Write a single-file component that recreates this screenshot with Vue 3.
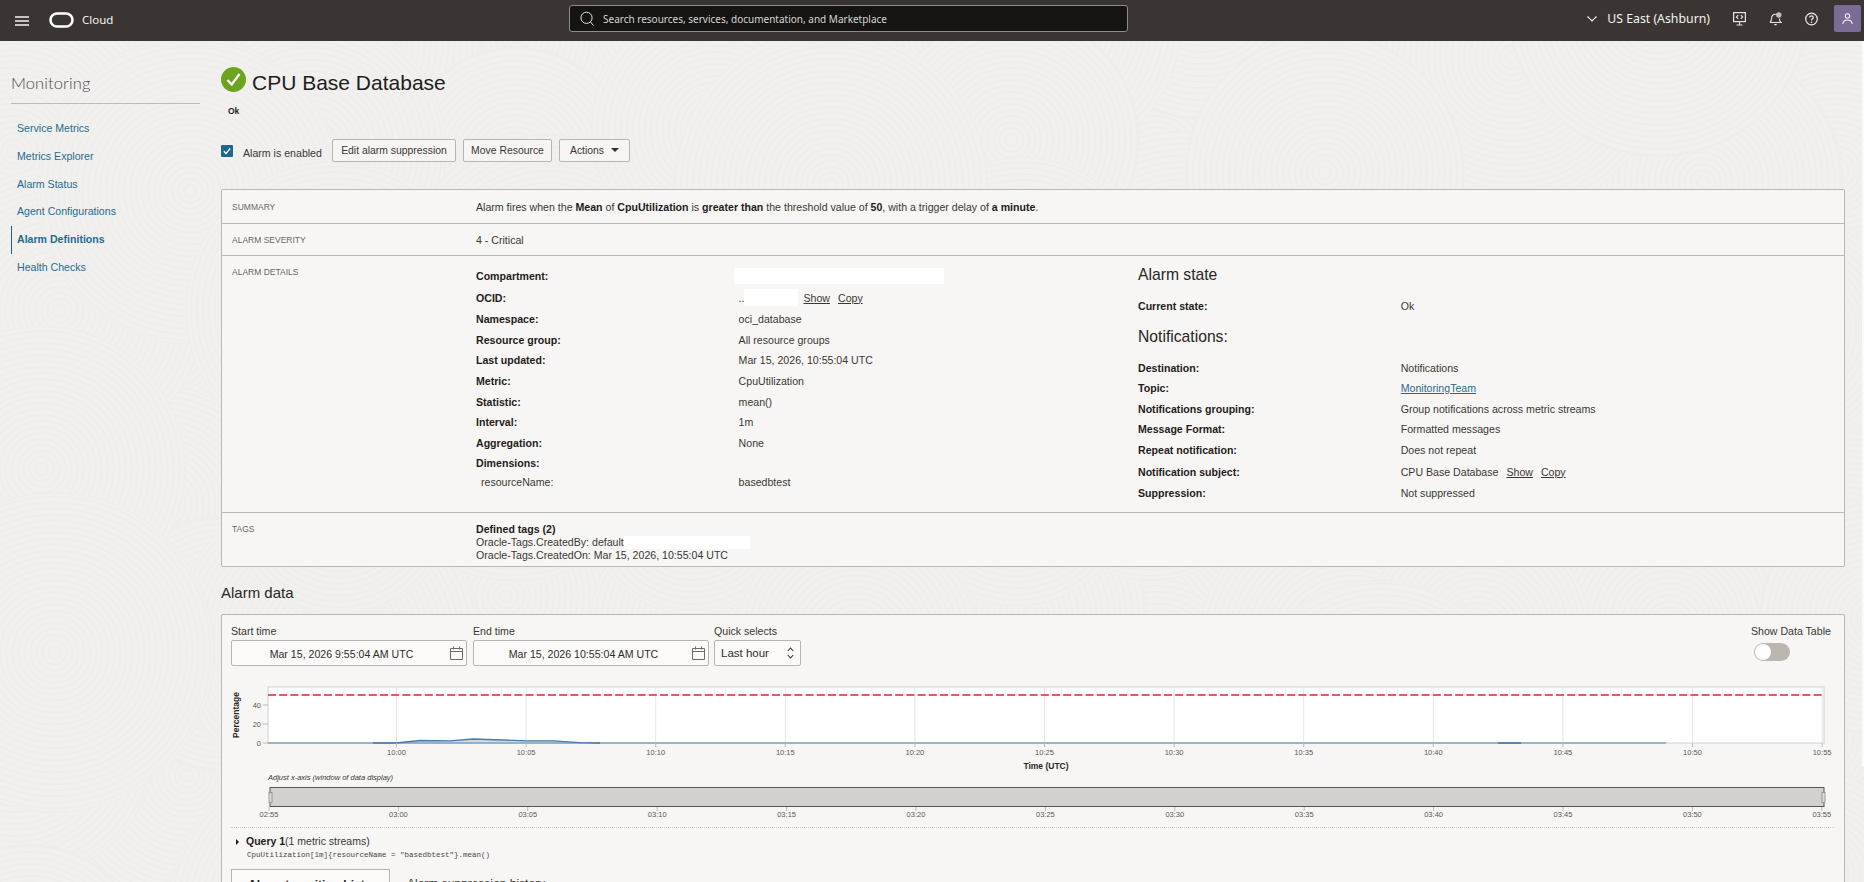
<script setup>
const nav = ['Service Metrics', 'Metrics Explorer', 'Alarm Status', 'Agent Configurations', 'Alarm Definitions', 'Health Checks']

const leftRows = [
  { k: 'Compartment:', v: '', h: 22 },
  { k: 'OCID:', v: '', h: 21.5, ocid: true },
  { k: 'Namespace:', v: 'oci_database', h: 21 },
  { k: 'Resource group:', v: 'All resource groups', h: 20.5 },
  { k: 'Last updated:', v: 'Mar 15, 2026, 10:55:04 UTC', h: 20 },
  { k: 'Metric:', v: 'CpuUtilization', h: 21 },
  { k: 'Statistic:', v: 'mean()', h: 21 },
  { k: 'Interval:', v: '1m', h: 20.5 },
  { k: 'Aggregation:', v: 'None', h: 21 },
  { k: 'Dimensions:', v: '', h: 19.5 },
  { k: 'resourceName:', v: 'basedbtest', h: 18, sub: true }
]

const rightRows = [
  { k: 'Destination:', v: 'Notifications', h: 21 },
  { k: 'Topic:', v: 'MonitoringTeam', h: 20.5, link: true },
  { k: 'Notifications grouping:', v: 'Group notifications across metric streams', h: 20.5 },
  { k: 'Message Format:', v: 'Formatted messages', h: 20.5 },
  { k: 'Repeat notification:', v: 'Does not repeat', h: 21.5 },
  { k: 'Notification subject:', v: 'CPU Base Database', h: 21.5, actions: true },
  { k: 'Suppression:', v: 'Not suppressed', h: 21 }
]

// Faint contour whorls of the page background
const whorls = []
let seed = 7
const rnd = () => {
  seed = (seed * 16807) % 2147483647
  return seed / 2147483647
}
for (let y = 20; y < 950; y += 150) {
  for (let x = 20; x < 1950; x += 165) {
    const cx = x + rnd() * 90 - 45
    const cy = y + rnd() * 90 - 45
    const R = 105 + rnd() * 55
    const rings = []
    for (let r = 6; r < R; r += 6) rings.push(r)
    whorls.push({ cx, cy, R, rings })
  }
}
whorls.sort(() => rnd() - 0.5)

const xStart = 396.5
const xStep = 129.6
const topTicks = Array.from({ length: 12 }, (_, i) => ({
  x: xStart + i * xStep,
  label: `10:${String(i * 5).padStart(2, '0')}`
}))
const rangeLabels = ['02:55', '03:00', '03:05', '03:10', '03:15', '03:20', '03:25', '03:30', '03:35', '03:40', '03:45', '03:50', '03:55']
const rangeTicks = rangeLabels.map((label, i) => ({ x: 269 + i * 129.4, label }))
const yTicks = [
  { y: 705, label: '40' },
  { y: 724, label: '20' },
  { y: 743, label: '0' }
]
</script>

<template>
  <div class="app">
    <svg class="texture" width="1864" height="882" viewBox="0 0 1864 882" aria-hidden="true">
      <g v-for="(w, i) in whorls" :key="i">
        <circle :cx="w.cx" :cy="w.cy" :r="w.R" class="whorl-bg" />
        <circle v-for="r in w.rings" :key="r" :cx="w.cx" :cy="w.cy" :r="r" class="whorl-ring" />
      </g>
    </svg>

    <header class="topbar">
      <div class="brand">
        <svg class="burger" width="14" height="10" viewBox="0 0 14 10">
          <path d="M0 1h14M0 5h14M0 9h14" stroke="#f4f3f1" stroke-width="1.4" fill="none" />
        </svg>
        <svg class="logo" width="25" height="16" viewBox="0 0 25 16">
          <rect x="1.5" y="1.5" width="22" height="13" rx="6.5" fill="none" stroke="#fff" stroke-width="2.6" />
        </svg>
        <span class="cloud">Cloud</span>
      </div>
      <div class="search">
        <svg width="15" height="16" viewBox="0 0 15 16">
          <circle cx="6.5" cy="6.8" r="5.6" fill="none" stroke="#e6e4e1" stroke-width="1" />
          <path d="M10.5 11l3 3.5" stroke="#e6e4e1" stroke-width="1" fill="none" />
        </svg>
        <span>Search resources, services, documentation, and Marketplace</span>
      </div>
      <div class="tools">
        <svg class="chev" width="10" height="6" viewBox="0 0 10 6">
          <path d="M.5.5L5 5 9.500.5" fill="none" stroke="#f4f3f1" stroke-width="1.2" />
        </svg>
        <span class="region">US East (Ashburn)</span>
        <svg class="tool first" width="13" height="14" viewBox="0 0 13 14">
          <rect x=".6" y=".6" width="11.800" height="9" fill="none" stroke="#e8e6e3" stroke-width="1.2" />
          <path d="M5.200 3.200L3.400 5l1.800 1.800M7.800 3.200L9.600 5 7.800 6.800M6.500 9.600v3M3.500 13h6" fill="none" stroke="#e8e6e3" stroke-width="1.100" />
        </svg>
        <svg class="tool" width="13" height="14" viewBox="0 0 13 14">
          <path d="M1 10.500c1.200-1 1.600-2 1.600-4.200C2.600 4 4.200 2.200 6.500 2.200c1 0 1.800.3 2.400.8M10.400 6.500c0 2 .4 3 1.600 4H1M5.300 12.600h2.400" fill="none" stroke="#e8e6e3" stroke-width="1.100" />
          <circle cx="9.800" cy="3" r="2.700" fill="#c4c1bd" />
        </svg>
        <svg class="tool" width="13" height="14" viewBox="0 0 13 14">
          <circle cx="6.500" cy="7" r="5.800" fill="none" stroke="#f0eeeb" stroke-width="1.200" />
          <path d="M4.700 5.500c0-1 .8-1.700 1.800-1.700s1.800.7 1.800 1.600c0 1.400-1.800 1.400-1.800 3" fill="none" stroke="#f0eeeb" stroke-width="1.200" />
          <circle cx="6.500" cy="10.200" r=".8" fill="#f0eeeb" />
        </svg>
        <div class="avatar">
          <svg width="11" height="12" viewBox="0 0 11 12">
            <circle cx="5.500" cy="3" r="2.200" fill="none" stroke="#f1eff4" stroke-width="1.100" />
            <path d="M.8 11c.3-2.600 2-4 4.700-4s4.400 1.400 4.700 4" fill="none" stroke="#f1eff4" stroke-width="1.100" />
          </svg>
        </div>
      </div>
    </header>

    <div class="layout">
      <aside class="sidebar">
        <div class="side-title">Monitoring</div>
        <ul class="nav">
          <li v-for="item in nav" :key="item" :class="{ active: item === 'Alarm Definitions' }">{{ item }}</li>
        </ul>
      </aside>

      <main class="main">
        <div class="title-row">
          <svg width="25" height="25" viewBox="0 0 25 25">
            <circle cx="12.500" cy="12.500" r="12.500" fill="#6ba51f" />
            <path d="M6.500 13l4.200 4.500L18.500 7" fill="none" stroke="#fff" stroke-width="2.300" />
          </svg>
          <h1>CPU Base Database</h1>
        </div>
        <div class="status">Ok</div>

        <div class="actions">
          <span class="check">
            <svg width="12" height="12" viewBox="0 0 12 12">
              <rect width="12" height="12" rx="1" fill="#1c6b8f" />
              <path d="M2.800 6.200l2.200 2.300 4.200-5" fill="none" stroke="#fff" stroke-width="1.300" />
            </svg>
          </span>
          <span class="check-label">Alarm is enabled</span>
          <button class="btn b1">Edit alarm suppression</button>
          <button class="btn b2">Move Resource</button>
          <button class="btn b3">Actions<i class="caret"></i></button>
        </div>

        <section class="card summary">
          <div class="row r-summary">
            <div class="label">Summary</div>
            <div class="val">Alarm fires when the <b>Mean</b> of <b>CpuUtilization</b> is <b>greater than</b> the threshold value of <b>50</b>, with a trigger delay of <b>a minute</b>.</div>
          </div>
          <div class="row r-severity">
            <div class="label">Alarm Severity</div>
            <div class="val">4 - Critical</div>
          </div>
          <div class="row r-details">
            <div class="label top">Alarm Details</div>
            <div class="col-left">
              <div v-for="r in leftRows" :key="r.k" class="kv" :class="{ sub: r.sub }" :style="{ height: r.h + 'px' }">
                <span class="k">{{ r.k }}</span>
                <span class="v">
                  <template v-if="r.k === 'Compartment:'"><i class="redact red-comp"></i></template>
                  <template v-else-if="r.ocid">..<i class="redact red-ocid"></i><a class="act">Show</a><a class="act">Copy</a></template>
                  <template v-else>{{ r.v }}</template>
                </span>
              </div>
            </div>
            <div class="col-right">
              <h3 class="state-head">Alarm state</h3>
              <div class="kv current"><span class="k">Current state:</span><span class="v">Ok</span></div>
              <h3>Notifications:</h3>
              <div v-for="r in rightRows" :key="r.k" class="kv" :style="{ height: r.h + 'px' }">
                <span class="k">{{ r.k }}</span>
                <span class="v">
                  <a v-if="r.link" class="link">{{ r.v }}</a>
                  <template v-else>{{ r.v }}</template>
                  <template v-if="r.actions"><a class="act first-act">Show</a><a class="act">Copy</a></template>
                </span>
              </div>
            </div>
          </div>
          <div class="row r-tags">
            <div class="label top">Tags</div>
            <div class="tags">
              <b>Defined tags (2)</b>
              <div>Oracle-Tags.CreatedBy: default<i class="redact red-tag"></i></div>
              <div>Oracle-Tags.CreatedOn: Mar 15, 2026, 10:55:04 UTC</div>
            </div>
          </div>
        </section>

        <h2>Alarm data</h2>

        <section class="card data">
          <div class="filters">
            <div class="field f-start">
              <label>Start time</label>
              <div class="input">
                <span>Mar 15, 2026 9:55:04 AM UTC</span>
                <svg class="cal" width="13" height="14" viewBox="0 0 13 14">
                  <path d="M.5 2.500h12v11H.5zM.5 5.500h12M3.500.5v3M9.500.5v3" fill="none" stroke="#6f6b67" stroke-width="1" />
                </svg>
              </div>
            </div>
            <div class="field f-end">
              <label>End time</label>
              <div class="input">
                <span>Mar 15, 2026 10:55:04 AM UTC</span>
                <svg class="cal" width="13" height="14" viewBox="0 0 13 14">
                  <path d="M.5 2.500h12v11H.5zM.5 5.500h12M3.500.5v3M9.500.5v3" fill="none" stroke="#6f6b67" stroke-width="1" />
                </svg>
              </div>
            </div>
            <div class="field f-quick">
              <label>Quick selects</label>
              <div class="input select">
                <span>Last hour</span>
                <svg width="7" height="12" viewBox="0 0 7 12">
                  <path d="M.8 4l2.700-3 2.700 3M.8 8l2.700 3 2.700-3" fill="none" stroke="#312d2a" stroke-width="1.100" />
                </svg>
              </div>
            </div>
            <div class="toggle-wrap">
              <div class="toggle-label">Show Data Table</div>
              <div class="toggle"><i></i></div>
            </div>
          </div>

          <svg class="chart" width="1622" height="145" viewBox="222 680 1622 145">
            <rect x="268" y="687" width="1556" height="56" fill="#fff" stroke="#d2d0cd" stroke-width="1" />
            <line v-for="t in topTicks" :key="t.label" :x1="t.x" :x2="t.x" y1="687" y2="743" stroke="#e6e5e3" stroke-width="1" />
            <line x1="268" x2="1824" y1="695" y2="695" stroke="#df5c60" stroke-width="2" stroke-dasharray="8 3.200" />
            <line v-for="t in yTicks" :key="t.y" x1="263" x2="268" :y1="t.y" :y2="t.y" stroke="#bbb" />
            <text v-for="t in yTicks" :key="'y' + t.y" x="261" :y="t.y + 3" text-anchor="end" class="tick">{{ t.label }}</text>
            <text class="axis" transform="translate(239 715) rotate(-90)" text-anchor="middle">Percentage</text>
            <path d="M373 743L396 743 420 740.500 450 740.800 473 739 527 740.800 553 740.800 580 742.700 600 743V743.500H373Z" fill="#d9d8d6" />
            <line x1="268" x2="1666" y1="743" y2="743" stroke="#7ea4c3" stroke-width="1.400" />
            <path d="M373 743L396 743 420 740.500 450 740.800 473 739 527 740.800 553 740.800 580 742.700 600 743" fill="none" stroke="#4a7cab" stroke-width="1.300" />
            <line x1="1498" x2="1521" y1="743" y2="743" stroke="#3f6fa3" stroke-width="1.400" />
            <g v-for="t in topTicks" :key="'l' + t.label">
              <line :x1="t.x" :x2="t.x" y1="743" y2="747" stroke="#bbb" />
              <text :x="t.x" y="755" text-anchor="middle" class="tick">{{ t.label }}</text>
            </g>
            <text x="1046" y="769" text-anchor="middle" class="axis">Time (UTC)</text>
            <text x="268" y="780" class="note">Adjust x-axis (window of data display)</text>
            <rect x="270" y="787.500" width="1554" height="19" fill="#d2d1cf" stroke="#57544f" stroke-width="1" />
            <rect x="269" y="792.500" width="3" height="10" fill="#dedcda" stroke="#8c8984" stroke-width=".8" />
            <rect x="1822" y="792.500" width="3" height="10" fill="#dedcda" stroke="#8c8984" stroke-width=".8" />
            <g v-for="t in rangeTicks" :key="t.label">
              <line :x1="t.x" :x2="t.x" y1="807" y2="811" stroke="#bbb" />
              <text :x="t.x" y="817" text-anchor="middle" class="tick">{{ t.label }}</text>
            </g>
          </svg>

          <div class="divider"></div>
          <div class="query"><i class="tri"></i><b>Query 1</b>(1 metric streams)</div>
          <div class="mql">CpuUtilization[1m]{resourceName = "basedbtest"}.mean()</div>
          <div class="tabs">
            <div class="tab on">Alarm transition history</div>
            <div class="tab">Alarm suppression history</div>
          </div>
        </section>
      </main>
    </div>
    <div class="thumb"></div>
  </div>
</template>

<style scoped>
.app {
  position: relative;
  width: 1864px;
  height: 882px;
  overflow: hidden;
  background: #f1f0ee;
  color: #3a3633;
  font-family: "Liberation Sans", Arial, sans-serif;
  font-size: 10.600px;
}
.texture { position: absolute; left: 0; top: 0; }
.whorl-bg { fill: #f1f0ee; stroke: #eeedeb; stroke-width: 1; }
.whorl-ring { fill: none; stroke: #eeedeb; stroke-width: 1.500; }

.topbar {
  position: relative;
  height: 41px;
  background: #3a3532;
  display: grid;
  grid-template-columns: 569px 559px 1fr;
  align-items: center;
  font-family: "Noto Sans", sans-serif;
  color: #f4f3f1;
}
.brand { display: flex; align-items: center; padding-left: 15px; margin-top: -2px; }
.burger { margin-top: 3px; }
.logo { margin-left: 20px; }
.cloud { margin-left: 8px; font-size: 11.500px; }
.search {
  height: 27px;
  box-sizing: border-box;
  margin-top: -4px;
  border: 1px solid #8f8c88;
  border-radius: 3px;
  background: #151412;
  display: flex;
  align-items: center;
  padding-left: 10px;
  font-size: 10px;
  color: #d8d6d3;
}
.search span { margin-left: 8px; }
.tools { display: flex; align-items: center; justify-content: flex-end; padding-right: 3px; margin-top: -4px; }
.region { margin-left: 10px; font-size: 12.300px; }
.tool { margin-left: 23px; }
.avatar {
  margin-left: 16px;
  width: 27px;
  height: 27px;
  border-radius: 2px;
  background: #7b6c96;
  display: flex;
  align-items: center;
  justify-content: center;
}

.layout { position: relative; display: flex; align-items: flex-start; }
.sidebar { width: 189px; margin-left: 11px; margin-right: 21px; }
.side-title {
  height: 63px;
  box-sizing: border-box;
  padding-top: 32px;
  border-bottom: 1px solid #bdbbb8;
  font-family: "Lato", sans-serif;
  font-weight: 300;
  font-size: 16.500px;
  letter-spacing: .1px;
  line-height: 20px;
  color: #4f4b47;
}
.nav { list-style: none; margin: 11px 0 0; padding: 0; }
.nav li {
  height: 27.800px;
  line-height: 27.800px;
  padding-left: 6px;
  color: #1f6c8e;
}
.nav li.active { border-left: 1px solid #1f5f80; padding-left: 5px; font-weight: 700; }

.main { width: 1623px; }
.title-row { display: flex; padding-top: 26px; height: 25px; }
h1 {
  margin: 3px 0 0 6px;
  font-size: 21px;
  font-weight: 400;
  line-height: 26px;
  color: #1f1c1a;
}
.status { margin: 14px 0 0 7px; height: 11px; line-height: 11px; font-size: 8.500px; font-weight: 700; color: #1f1c1a; }
.actions { display: flex; align-items: center; margin-top: 22px; height: 23px; }
.check { display: flex; margin-top: 1px; }
.check-label { margin: 5px 0 0 10px; width: 89px; }
.btn {
  height: 23px;
  box-sizing: border-box;
  padding: 0;
  border: 1px solid #b8b5b1;
  border-radius: 2px;
  background: #f6f5f3;
  font: 10.400px "Liberation Sans", Arial, sans-serif;
  color: #3a3633;
}
.b1 { width: 124px; }
.b2 { width: 89px; margin-left: 7px; }
.b3 { width: 71px; margin-left: 7px; }
.caret {
  display: inline-block;
  margin-left: 7px;
  border-left: 4px solid transparent;
  border-right: 4px solid transparent;
  border-top: 4px solid #312d2a;
  vertical-align: 2px;
}

.card {
  box-sizing: border-box;
  border: 1px solid #b9b7b4;
  border-radius: 2px;
  background: #f7f6f4;
  position: relative;
}
.summary { margin-top: 27px; height: 378px; width: 1624px; }
.row { display: flex; border-bottom: 1px solid #bdbbb8; box-sizing: border-box; }
.row:last-child { border-bottom: 0; }
.label {
  width: 254px;
  flex: none;
  box-sizing: border-box;
  padding-left: 10px;
  font-size: 8.500px;
  color: #6a6662;
  text-transform: uppercase;
  align-self: center;
}
.label.top { align-self: flex-start; }
.r-summary { height: 34px; align-items: center; }
.r-severity { height: 32px; align-items: center; }
.r-details { height: 257px; }
.r-details .label { padding-top: 11px; }
.r-tags { height: 54px; }
.r-tags .label { padding-top: 11px; }
.val b, .k, .tags b { color: #1f1c1a; font-weight: 700; }
.col-left { width: 662px; flex: none; padding-top: 9px; }
.col-right { flex: 1; margin-top: -1px; }
.kv { display: flex; align-items: center; }
.col-left .k { width: 262.600px; flex: none; }
.col-right .k { width: 262.700px; flex: none; }
.sub .k { font-weight: 400; color: #3a3633; padding-left: 5px; width: 257.600px !important; }
.current { height: 22px; }
h3 {
  margin: 0;
  height: 40px;
  line-height: 40px;
  font-size: 15.700px;
  font-weight: 400;
  color: #2a2623;
}
.v { display: flex; align-items: center; position: relative; }
.redact { display: block; background: #fff; }
.red-comp { position: absolute; left: -5px; top: -8px; width: 210px; height: 16px; }
.red-ocid { width: 54px; height: 17px; margin-right: 5px; }
.red-tag { display: inline-block; width: 126px; height: 13px; vertical-align: -3px; }
.act { color: #3a3633; text-decoration: underline; margin-right: 8px; }
.first-act { margin-left: 8px; }
.link { color: #1f6c8e; text-decoration: underline; }
.tags { padding-top: 10px; line-height: 13px; }

h2 {
  margin: 18px 0 0;
  height: 20px;
  line-height: 16px;
  font-size: 15px;
  font-weight: 400;
  color: #2a2623;
}
.data { margin-top: 9px; width: 1624px; height: 300px; }
.filters { display: flex; padding: 9px 0 0 9px; height: 43px; box-sizing: content-box; }
.field label { display: block; height: 16px; line-height: 14px; color: #3a3633; }
.input {
  height: 26px;
  box-sizing: border-box;
  border: 1px solid #b8b5b1;
  border-radius: 2px;
  background: #fbfaf9;
  display: flex;
  align-items: center;
  position: relative;
  color: #312d2a;
}
.f-start .input { width: 236px; }
.f-end { margin-left: 6px; }
.f-end .input { width: 236px; }
.f-quick { margin-left: 5px; }
.f-quick .input { width: 87px; }
.input span { flex: 1; text-align: center; padding-right: 15px; padding-top: 1px; }
.cal { position: absolute; right: 3px; top: 5px; }
.select { padding: 0 6px; justify-content: space-between; }
.select span { text-align: left; padding: 0; font-size: 11.500px; }
.toggle-wrap { margin-left: auto; width: 93px; }
.toggle-label { line-height: 14px; height: 20px; color: #3a3633; }
.toggle {
  width: 36px;
  height: 18px;
  margin-left: 3px;
  margin-top: -1px;
  border-radius: 9px;
  background: #bcb6b1;
  position: relative;
}
.toggle i {
  position: absolute;
  left: 1px;
  top: 1px;
  width: 16px;
  height: 16px;
  border-radius: 50%;
  background: #fff;
}
.chart { display: block; margin-top: 13px; }
.tick { font: 7.500px "Liberation Sans", Arial, sans-serif; fill: #5c5854; }
.axis { font: 700 8.500px "Liberation Sans", Arial, sans-serif; fill: #2a2623; }
.note { font: italic 7.500px "Liberation Sans", Arial, sans-serif; fill: #3a3633; }
.divider { margin: 2px 9px 0 9px; border-top: 1px dotted #cfcdca; }
.query { display: flex; align-items: center; padding: 6px 0 0 14px; height: 14px; line-height: 14px; font-size: 10.500px; color: #3a3633; }
.query b { color: #1f1c1a; }
.tri {
  border-left: 3.500px solid #1f1c1a;
  border-top: 3.500px solid transparent;
  border-bottom: 3.500px solid transparent;
  margin-right: 7px;
  margin-top: 1px;
}
.mql {
  margin-left: 25px;
  height: 16px;
  font: 7.500px/15px "Liberation Mono", monospace;
  color: #4a4642;
}
.tabs { display: flex; margin: 5px 0 0 9px; }
.tab {
  font-size: 12px;
  line-height: 14px;
  padding-top: 8px;
  height: 40px;
  box-sizing: border-box;
}
.tab.on {
  width: 159px;
  border: 1px solid #b8b5b1;
  background: #fbfaf9;
  padding-left: 16px;
  font-weight: 700;
  color: #1f1c1a;
  white-space: nowrap;
  overflow: hidden;
}
.tab:not(.on) { margin-left: 17px; }
.thumb { position: absolute; right: 0; top: 41px; width: 2px; height: 726px; background: #fbfbfa; }
</style>
